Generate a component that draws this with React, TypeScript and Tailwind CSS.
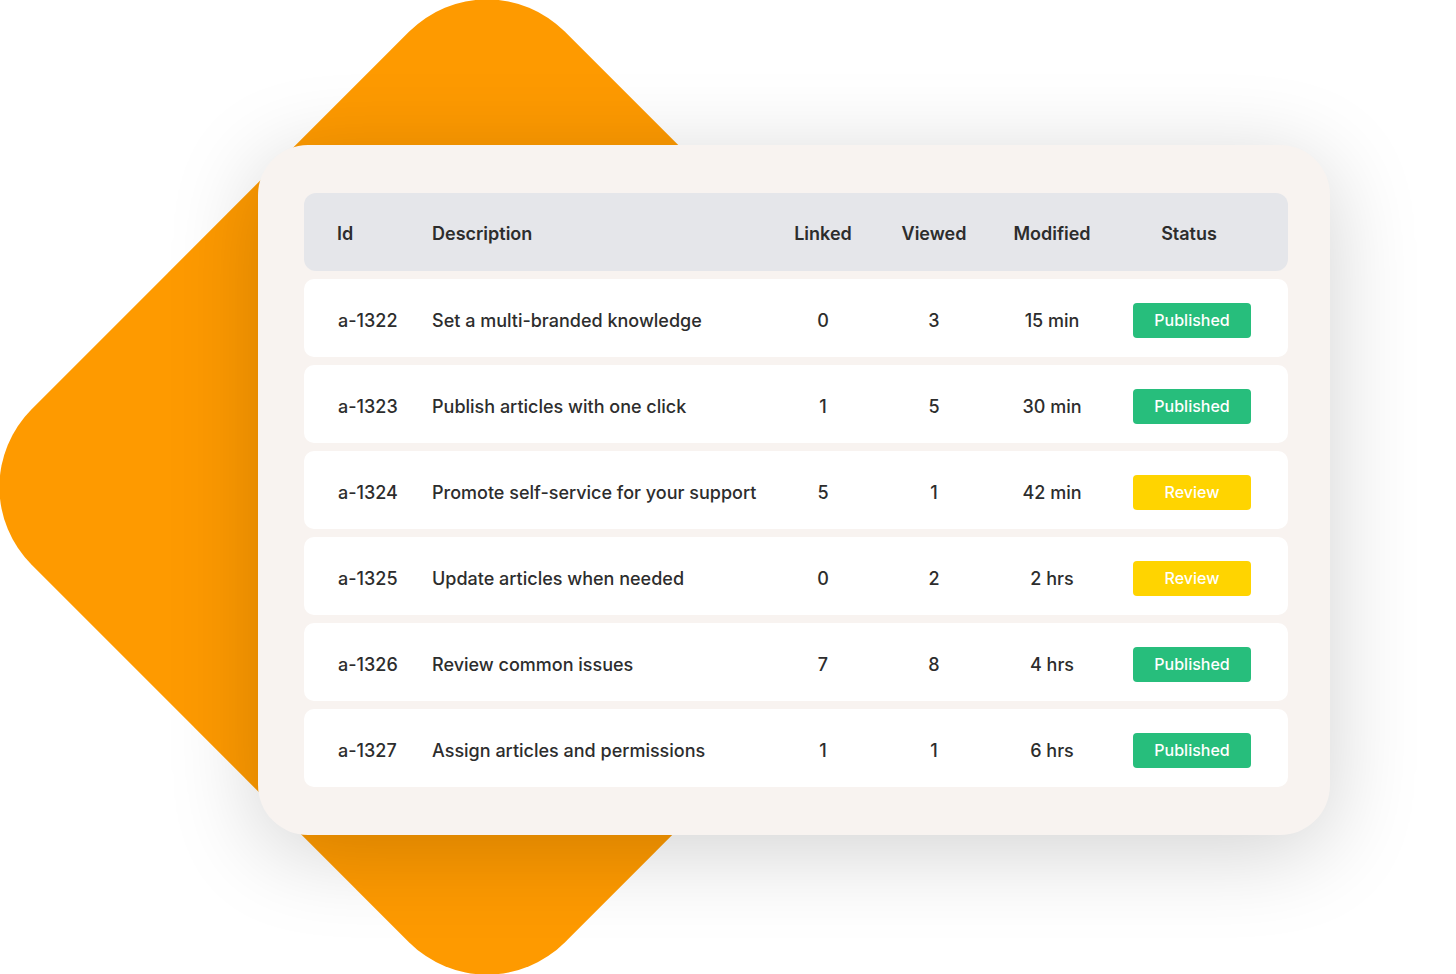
import React from 'react';

type Status = 'Published' | 'Review';

interface Article {
  id: string;
  description: string;
  linked: number;
  viewed: number;
  modified: string;
  status: Status;
}

const articles: Article[] = [
  { id: 'a-1322', description: 'Set a multi-branded knowledge', linked: 0, viewed: 3, modified: '15 min', status: 'Published' },
  { id: 'a-1323', description: 'Publish articles with one click', linked: 1, viewed: 5, modified: '30 min', status: 'Published' },
  { id: 'a-1324', description: 'Promote self-service for your support', linked: 5, viewed: 1, modified: '42 min', status: 'Review' },
  { id: 'a-1325', description: 'Update articles when needed', linked: 0, viewed: 2, modified: '2 hrs', status: 'Review' },
  { id: 'a-1326', description: 'Review common issues', linked: 7, viewed: 8, modified: '4 hrs', status: 'Published' },
  { id: 'a-1327', description: 'Assign articles and permissions', linked: 1, viewed: 1, modified: '6 hrs', status: 'Published' },
];

const cols = 'grid grid-cols-[94px_343px_96px_126px_110px_170px] items-center pl-[34px]';

function Badge({ status }: { status: Status }) {
  const color = status === 'Published' ? 'bg-[#27be7c]' : 'bg-[#ffd400]';
  return (
    <span className={`${color} flex h-[35px] w-[118px] items-center justify-center rounded-[4px] text-[16px] font-medium text-white`}>
      {status}
    </span>
  );
}

export default function App() {
  return (
    <div className="relative h-[974px] w-[1456px] overflow-hidden bg-white font-['Inter',sans-serif] text-[#2d2d2d]">
      {/* orange diamond behind the card */}
      <div className="absolute left-[110px] top-[110px] h-[754px] w-[754px] rotate-45 rounded-[110px] bg-[#fe9a00]" />

      <div className="relative ml-[258px] mt-[145px] w-[1072px] rounded-[50px] bg-[#f8f3f0] py-[48px] pl-[46px] pr-[42px] shadow-[0_16px_90px_rgba(0,0,0,0.18)]">
        <div className="flex flex-col gap-2">
          <div className={`${cols} h-[78px] rounded-[12px] bg-[#e5e6ea] pt-[2px] text-[18px] font-semibold`}>
            <span className="-ml-[1px]">Id</span>
            <span>Description</span>
            <span className="text-center">Linked</span>
            <span className="text-center">Viewed</span>
            <span className="text-center">Modified</span>
            <span className="pr-[6px] text-center">Status</span>
          </div>

          {articles.map((a) => (
            <div key={a.id} className={`${cols} h-[78px] rounded-[10px] bg-white pt-[4px] text-[18px] font-medium`}>
              <span>{a.id}</span>
              <span className="whitespace-nowrap">{a.description}</span>
              <span className="text-center">{a.linked}</span>
              <span className="text-center">{a.viewed}</span>
              <span className="text-center">{a.modified}</span>
              <span className="flex justify-center">
                <Badge status={a.status} />
              </span>
            </div>
          ))}
        </div>
      </div>
    </div>
  );
}
